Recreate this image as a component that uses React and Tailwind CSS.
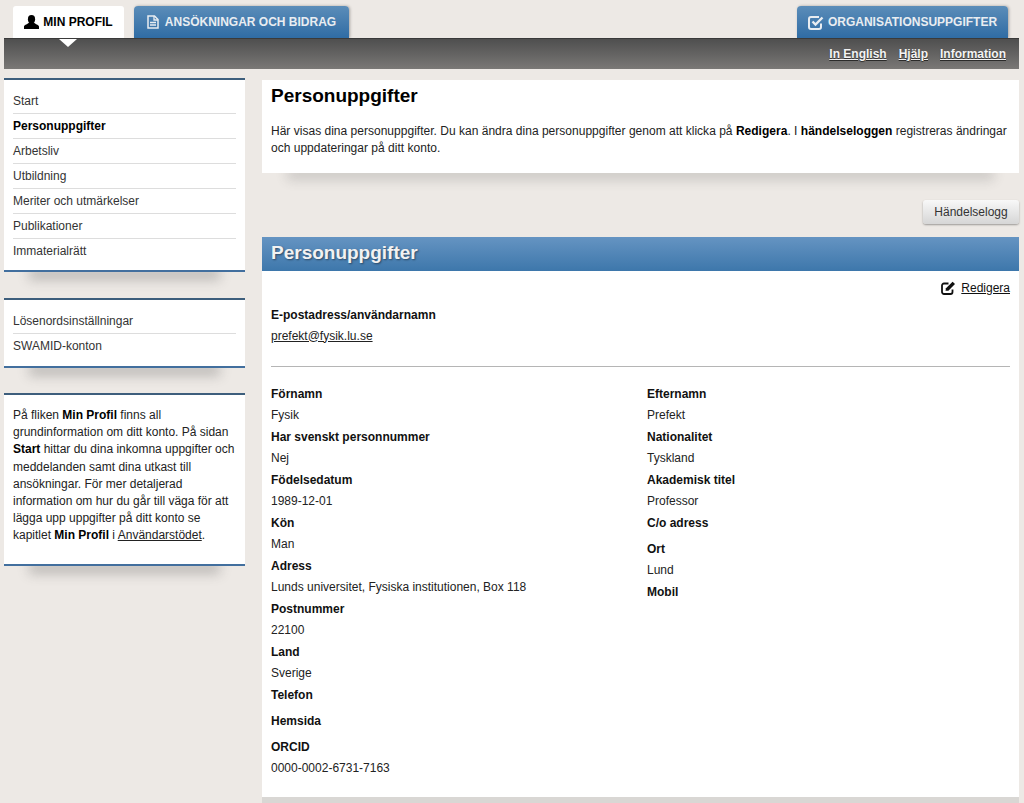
import React from "react";

const font = { fontFamily: '"Liberation Sans", Arial, sans-serif' };

function UserIcon() {
  return (
    <svg viewBox="0 0 15 14" className="h-[14px] w-[15px]" fill="currentColor">
      <ellipse cx="7.5" cy="4.2" rx="3.6" ry="4.2" />
      <path d="M0 14 V11.6 C0 9.8 3.6 9.4 5.4 7.2 H9.6 C11.4 9.4 15 9.8 15 11.6 V14 Z" />
    </svg>
  );
}

function FileIcon() {
  return (
    <svg viewBox="0 0 12 14" className="h-[14px] w-[12px]" fill="none" stroke="currentColor">
      <path d="M1 1 H7.5 L11 4.5 V13 H1 Z" strokeWidth="1.5" />
      <path d="M7 1 V5 H11" strokeWidth="1.3" />
      <path d="M3 7.5 H9 M3 10 H9" strokeWidth="1.4" />
    </svg>
  );
}

function CheckIcon() {
  return (
    <svg viewBox="0 0 16 15" className="h-[15px] w-[16px]" fill="none" stroke="currentColor" strokeWidth="2">
      <path d="M13 8.5 V12 A2 2 0 0 1 11 14 H3 A2 2 0 0 1 1 12 V4 A2 2 0 0 1 3 2 H11" />
      <path d="M4.5 6.5 L7.5 9.5 L14.5 2.5" strokeWidth="2.4" />
    </svg>
  );
}

function EditIcon() {
  return (
    <svg viewBox="0 0 15 14" className="h-[14px] w-[15px]" fill="none" stroke="currentColor" strokeWidth="1.8">
      <path d="M11.5 8.5 V11 A2 2 0 0 1 9.5 13 H3 A2 2 0 0 1 1 11 V4.5 A2 2 0 0 1 3 2.5 H7.5" />
      <path d="M4.5 9.8 L5 7.3 L11.6 0.7 L14 3.1 L7.4 9.7 Z" fill="currentColor" stroke="none" />
    </svg>
  );
}

function Panel({ className = "", children }) {
  return (
    <div className={"relative " + className}>
      <div className="absolute left-[25px] right-[25px] bottom-0 h-[12px] shadow-[0_8px_12px_rgba(70,70,70,0.28)]" />
      <div className="relative h-full border-t-2 border-b-2 border-t-[#3d5e7c] border-b-[#426f9e] bg-white">{children}</div>
    </div>
  );
}

function NavRow({ children, bold, last }) {
  return (
    <div className={`mx-[9px] flex items-center border-b ${last ? "h-[24px] border-transparent" : "h-[25px] border-[#dddddd]"} ${bold ? "font-bold text-black" : "text-[#333]"}`}>
      {children}
    </div>
  );
}

function Label({ children }) {
  return <div className="h-[21.5px] leading-[22.5px] font-bold text-[#111]">{children}</div>;
}

function Field({ label, value, tall }) {
  return (
    <div className={tall ? "mb-[4.5px]" : ""}>
      <Label>{label}</Label>
      {value && <div className="h-[21.5px] leading-[21.5px] text-[#222]">{value}</div>}
    </div>
  );
}

export default function App() {
  return (
    <div style={font} className="h-[803px] w-[1024px] overflow-hidden bg-[#ede9e5] text-[12px] text-[#222]">
      <div className="flex h-[38px] items-end pl-[13px] pr-[16px]">
        <div className="flex h-[32px] w-[111px] items-center justify-center gap-[4px] rounded-t-[3px] bg-white text-[12px] font-bold text-black">
          <UserIcon />
          <span>MIN PROFIL</span>
        </div>
        <div className="ml-[10px] flex h-[32px] w-[215px] items-center justify-center gap-[6px] rounded-t-[4px] bg-gradient-to-b from-[#5b8db9] to-[#2f6ca4] text-[12px] font-bold text-[#e9edf1] shadow-[1px_0_3px_rgba(0,0,0,0.3)]">
          <FileIcon />
          <span>ANSÖKNINGAR OCH BIDRAG</span>
        </div>
        <div className="ml-auto flex h-[32px] w-[211px] items-center justify-center gap-[4px] rounded-t-[4px] bg-gradient-to-b from-[#5b8db9] to-[#2f6ca4] text-[12px] font-bold text-[#e9edf1] shadow-[1px_0_3px_rgba(0,0,0,0.3)]">
          <CheckIcon />
          <span>ORGANISATIONSUPPGIFTER</span>
        </div>
      </div>

      <div className="relative ml-[4px] mr-[5px] flex h-[31px] items-center justify-end gap-[12px] border-t border-[#3a3a3a] bg-gradient-to-b from-[#4f4f4f] to-[#7a7876] pr-[13px] text-[12px] font-bold text-[#f3f3f3] underline [text-shadow:0_1px_1px_rgba(0,0,0,0.6)]">
        <div className="absolute left-[55px] top-0 h-0 w-0 border-x-[9px] border-t-[8px] border-x-transparent border-t-white" />
        <span>In English</span>
        <span>Hjälp</span>
        <span>Information</span>
      </div>

      <div className="mt-[9px] flex pl-[4px] pr-[5px]">
        <div className="w-[241px] shrink-0">
          <Panel className="h-[194px]">
            <div className="pt-[9px]">
              <NavRow>Start</NavRow>
              <NavRow bold>Personuppgifter</NavRow>
              <NavRow>Arbetsliv</NavRow>
              <NavRow>Utbildning</NavRow>
              <NavRow>Meriter och utmärkelser</NavRow>
              <NavRow>Publikationer</NavRow>
              <NavRow last>Immaterialrätt</NavRow>
            </div>
          </Panel>
          <Panel className="mt-[26px] h-[70px]">
            <div className="pt-[9px]">
              <NavRow>Lösenordsinställningar</NavRow>
              <NavRow last>SWAMID-konton</NavRow>
            </div>
          </Panel>
          <Panel className="mt-[25px] h-[173px]">
            <p className="px-[9px] pt-[12px] leading-[17.2px] text-[#222]">
              På fliken <b className="text-black">Min Profil</b> finns all grundinformation om ditt konto. På sidan <b className="text-black">Start</b> hittar du dina inkomna uppgifter och meddelanden samt dina utkast till ansökningar. För mer detaljerad information om hur du går till väga för att lägga upp uppgifter på ditt konto se kapitlet <b className="text-black">Min Profil</b> i <span className="underline">Användarstödet</span>.
            </p>
          </Panel>
        </div>

        <div className="ml-[17px] min-w-0 flex-1 pt-[2px]">
          <div className="relative h-[93px]">
            <div className="absolute bottom-0 left-[25px] right-[25px] h-[12px] shadow-[0_7px_12px_rgba(70,70,70,0.2)]" />
            <div className="relative h-full bg-white px-[9px] pt-[4px]">
              <h1 className="text-[19px] leading-[23px] font-bold text-black">Personuppgifter</h1>
              <p className="mt-[16px] leading-[17px] tracking-[0.015px] text-[#222]">
                Här visas dina personuppgifter. Du kan ändra dina personuppgifter genom att klicka på <b className="text-black">Redigera</b>. I <b className="text-black">händelseloggen</b> registreras ändringar och uppdateringar på ditt konto.
              </p>
            </div>
          </div>

          <div className="mt-[27px] flex justify-end">
            <div className="flex h-[24px] w-[96px] items-center justify-center rounded-[3px] bg-gradient-to-b from-[#f8f8f8] to-[#d6d6d6] text-[#333] shadow-[0_1px_2px_rgba(0,0,0,0.35)]">Händelselogg</div>
          </div>

          <div className="mt-[13px] flex h-[34px] items-center bg-gradient-to-b from-[#6594c2] to-[#3d77ab] pb-[1px] pl-[9px] text-[19px] font-bold text-[#f2f2f2] [text-shadow:1px_1px_2px_rgba(0,0,0,0.45)]">
            Personuppgifter
          </div>

          <div className="h-[526px] bg-white px-[9px]">
            <div className="flex h-[33px] items-center justify-end gap-[5px] pt-[1px] text-[#111]">
              <EditIcon />
              <span className="underline">Redigera</span>
            </div>
            <Label>E-postadress/användarnamn</Label>
            <div className="h-[21.5px] leading-[21.5px] underline">prefekt@fysik.lu.se</div>
            <div className="mt-[19px] border-t border-[#b5b5b5]" />
            <div className="mt-[16px] flex">
              <div className="w-[376px] shrink-0">
                <Field label="Förnamn" value="Fysik" />
                <Field label="Har svenskt personnummer" value="Nej" />
                <Field label="Födelsedatum" value="1989-12-01" />
                <Field label="Kön" value="Man" />
                <Field label="Adress" value="Lunds universitet, Fysiska institutionen, Box 118" />
                <Field label="Postnummer" value="22100" />
                <Field label="Land" value="Sverige" />
                <Field label="Telefon" tall />
                <Field label="Hemsida" tall />
                <Field label="ORCID" value="0000-0002-6731-7163" />
              </div>
              <div>
                <Field label="Efternamn" value="Prefekt" />
                <Field label="Nationalitet" value="Tyskland" />
                <Field label="Akademisk titel" value="Professor" />
                <Field label="C/o adress" tall />
                <Field label="Ort" value="Lund" />
                <Field label="Mobil" />
              </div>
            </div>
          </div>
          <div className="h-[6px] bg-[#d9d7d4]" />
        </div>
      </div>
    </div>
  );
}
